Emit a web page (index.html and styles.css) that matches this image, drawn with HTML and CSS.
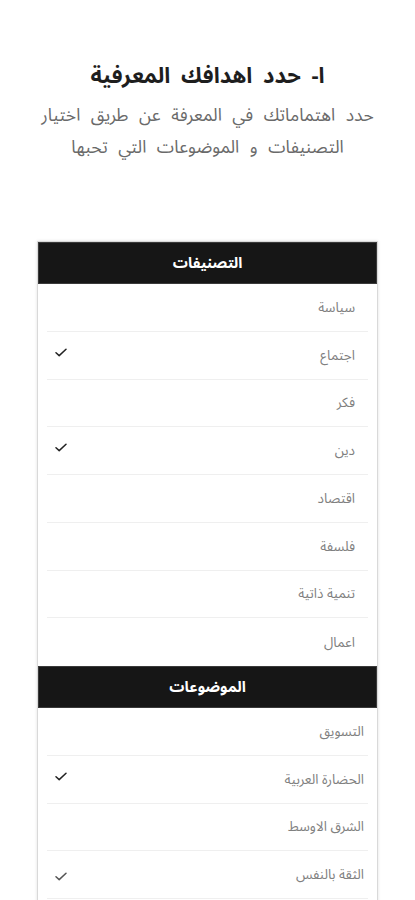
FILE: index.html
```html
<!DOCTYPE html>
<html lang="ar" dir="rtl">
<head>
<meta charset="utf-8">
<link rel="stylesheet" href="styles.css">
</head>
<body>
<main class="page">
  <header class="intro">
    <h1 class="title">ا- حدد اهدافك المعرفية</h1>
    <p class="subtitle"><span class="line">حدد اهتماماتك في المعرفة عن طريق اختيار</span><span class="line">التصنيفات و الموضوعات التي تحبها</span></p>
  </header>

  <section class="card">
    <div class="card-head">التصنيفات</div>
    <ul class="list">
      <li class="row"><span class="label">سياسة</span></li>
      <li class="row"><span class="label">اجتماع</span><svg class="check" viewBox="0 0 12 9"><path d="M1 4.8 L4.2 7.6 L11 1.2"/></svg></li>
      <li class="row"><span class="label">فكر</span></li>
      <li class="row"><span class="label">دين</span><svg class="check" viewBox="0 0 12 9"><path d="M1 4.8 L4.2 7.6 L11 1.2"/></svg></li>
      <li class="row"><span class="label">اقتصاد</span></li>
      <li class="row"><span class="label">فلسفة</span></li>
      <li class="row"><span class="label">تنمية ذاتية</span></li>
      <li class="row row-last"><span class="label">اعمال</span></li>
    </ul>
    <div class="card-head">الموضوعات</div>
    <ul class="list list-topics">
      <li class="row"><span class="label">التسويق</span></li>
      <li class="row"><span class="label">الحضارة العربية</span><svg class="check" viewBox="0 0 12 9"><path d="M1 4.8 L4.2 7.6 L11 1.2"/></svg></li>
      <li class="row"><span class="label">الشرق الاوسط</span></li>
      <li class="row"><span class="label">الثقة بالنفس</span><svg class="check check-soft" viewBox="0 0 12 9"><path d="M1 4.8 L4.2 7.6 L11 1.2"/></svg></li>
      <li class="row row-empty"></li>
    </ul>
  </section>
</main>
</body>
</html>
```

FILE: styles.css
```css
* { box-sizing: border-box; }
html, body { margin: 0; padding: 0; background: #ffffff; }
body {
  font-family: "Noto Sans Arabic", "DejaVu Sans", "Noto Sans", sans-serif;
  color: #222;
}
.page { width: 415px; }
.intro { text-align: center; padding-top: 61px; }
.title {
  margin: 0;
  font-size: 22px;
  line-height: 30px;
  font-weight: 700;
  word-spacing: 5px;
  color: #1e1e1e;
}
.subtitle {
  margin: 9px 0 0;
  font-size: 17.5px;
  line-height: 32px;
  word-spacing: 6px;
  color: #6a6a6a;
}
.line { display: block; height: 32px; }
.card {
  margin: 77px 37px 0;
  border: 1px solid #d9d9d9;
  box-shadow: 0 0 3px rgba(0,0,0,0.12);
  background: #fff;
}
.card-head {
  height: 42px;
  background: #161616;
  color: #fff;
  font-weight: 700;
  font-size: 15px;
  display: flex;
  align-items: center;
  justify-content: center;
  border: 1px solid #3a3a3a;
}
.list { list-style: none; margin: 0; padding: 0; }
.row {
  height: 47.75px;
  margin: 0 9px;
  padding: 0 13px 0 8px;
  display: flex;
  align-items: center;
  justify-content: space-between;
  border-bottom: 1px solid #efefef;
}
.row-last { border-bottom: none; }
.list-topics .row { padding-right: 4px; }
.label { font-size: 13.5px; color: #808080; }
.check {
  width: 12px;
  height: 9px;
  margin-top: -6px;
  fill: none;
  stroke: #222;
  stroke-width: 1.5;
  stroke-linecap: round;
  stroke-linejoin: round;
}
.check-soft { stroke: #555; margin-top: 4px; }
.row-empty { height: 48px; }
```
